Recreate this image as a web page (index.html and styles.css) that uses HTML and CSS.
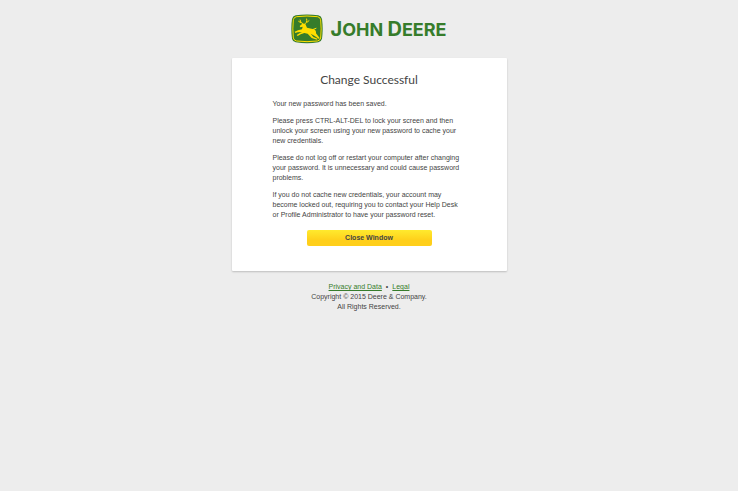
FILE: index.html
```html
<!DOCTYPE html>
<html lang="en">
<head>
<meta charset="utf-8">
<meta name="viewport" content="width=device-width, initial-scale=1">
<title>Change Successful</title>
<link rel="stylesheet" href="styles.css">
</head>
<body>
<header class="brand">
  <svg class="brand-mark" viewBox="0 0 96 88" aria-hidden="true">
    <path d="M14 3Q48-2 82 3Q91 5 93 14Q97 44 93 73Q91 82 82 84Q48 90 14 84Q5 82 3 73Q-1 44 3 14Q5 5 14 3Z" fill="#367c2b"/>
    <path d="M17 7Q48 3 79 7Q87 8 89 16Q92 44 89 71Q87 79 79 80Q48 84 17 80Q9 79 7 71Q4 44 7 16Q9 8 17 7Z" fill="#367c2b" stroke="#ffde00" stroke-width="3"/>
    <path d="M26 35L34 28L43 29L48 40L65 44Q74 45 75 53L75 57L86 71L84 74L70 64L59 58L67 68L80 73L78 76L62 71L50 58L40 56L29 60L20 65L17 62L28 55L33 53L20 54L13 56L11 52L21 48L33 45L35 37L28 39Z" fill="#ffde00"/>
    <path d="M37 29Q27 26 27 17M29 25L23 21M40 30Q50 25 47 14M48 24L54 19M67 45L75 42" fill="none" stroke="#ffde00" stroke-width="3" stroke-linecap="round"/>
  </svg>
  <span class="brand-name"><span class="brand-cap">J</span>OHN <span class="brand-cap">D</span>EERE</span>
</header>
<main class="card">
  <h1 class="title">Change Successful</h1>
  <div class="message">
    <p>Your new password has been saved.</p>
    <p>Please press CTRL-ALT-DEL to lock your screen and then<br>unlock your screen using your new password to cache your<br>new credentials.</p>
    <p>Please do not log off or restart your computer after changing<br>your password. It is unnecessary and could cause password<br>problems.</p>
    <p>If you do not cache new credentials, your account may<br>become locked out, requiring you to contact your Help Desk<br>or Profile Administrator to have your password reset.</p>
  </div>
  <button class="close" type="button">Close Window</button>
</main>
<footer class="footer">
  <nav class="links"><a href="#">Privacy and Data</a><span>•</span><a href="#">Legal</a></nav>
  <p>Copyright © 2015 Deere &amp; Company.</p>
  <p>All Rights Reserved.</p>
</footer>
</body>
</html>
```
FILE: styles.css
```css
* { box-sizing: border-box; }

body {
  margin: 0;
  padding: 14px 16px;
  background: #ededed;
  color: #444;
  font-family: "Liberation Sans", Arial, sans-serif;
  font-size: 7px;
  line-height: 10px;
}

p { margin: 0; }

.brand {
  display: flex;
  justify-content: center;
  align-items: center;
  gap: 7px;
  height: 30px;
}

.brand-mark { width: 32px; height: 30px; }

.brand-name {
  color: #367c2b;
  font-family: Inter, sans-serif;
  font-size: 18px;
  font-weight: 700;
  line-height: 30px;
  white-space: nowrap;
}

.brand-cap { font-size: 20px; }

.card {
  max-width: 275px;
  margin: 14px auto 0;
  padding: 14px 40px 25px;
  display: flex;
  flex-direction: column;
  align-items: center;
  background: #fff;
  border-radius: 1px;
  box-shadow: 0 1px 2px rgba(0, 0, 0, 0.2);
}

.title {
  margin: 0;
  font-family: Lato, sans-serif;
  font-size: 12px;
  font-weight: 400;
  line-height: 16px;
}

.message {
  align-self: stretch;
  margin: 11px 0 10px;
  padding-left: 1px;
  display: flex;
  flex-direction: column;
  gap: 7px;
  white-space: nowrap;
}

.close {
  width: 125px;
  height: 16px;
  padding: 0;
  border: 0;
  border-radius: 2px;
  background: linear-gradient(#ffea2e, #ffcf1a 65%);
  color: #444;
  font: bold 7px/16px "Liberation Sans", Arial, sans-serif;
}

.footer {
  margin-top: 11px;
  text-align: center;
}

.links {
  display: flex;
  justify-content: center;
  gap: 4px;
}

.links a { color: #367c2b; }
```
